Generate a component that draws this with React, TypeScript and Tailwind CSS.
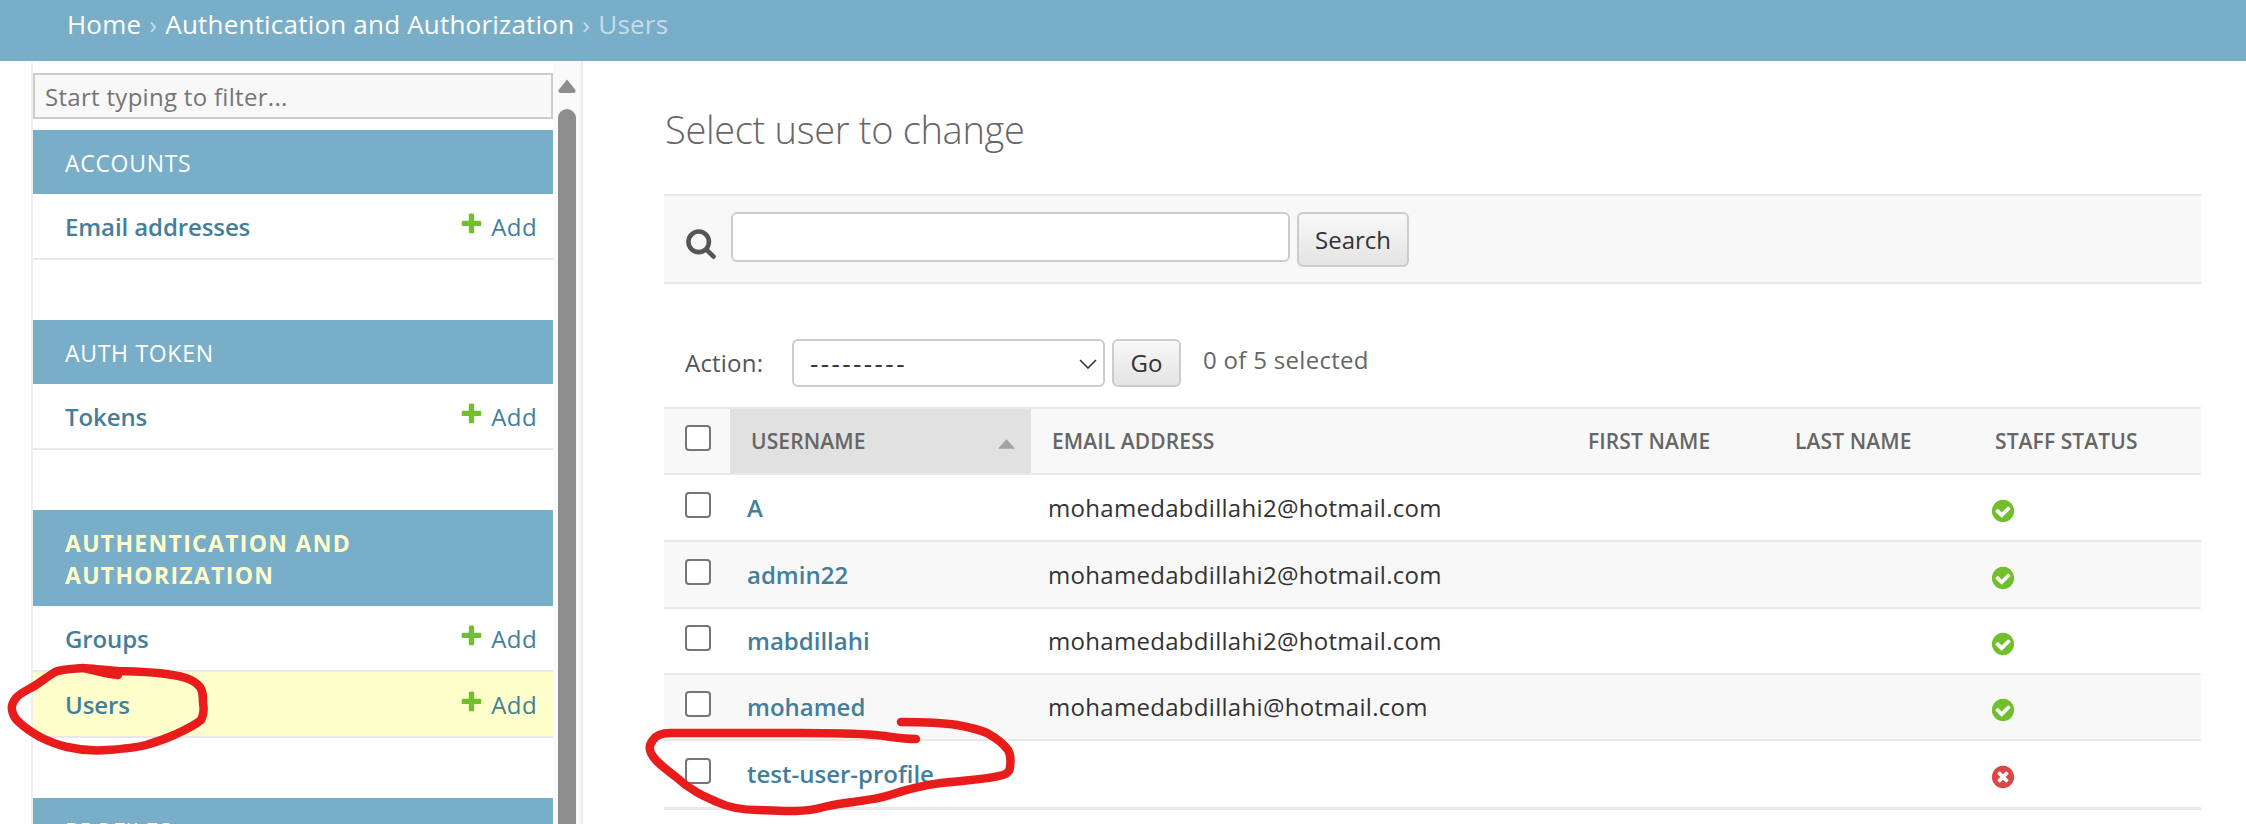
import React from 'react';

const PLUS = 'M1600 796v192q0 40-28 68t-68 28h-416v416q0 40-28 68t-68 28h-192q-40 0-68-28t-28-68v-416h-416q-40 0-68-28t-28-68v-192q0-40 28-68t68-28h416v-416q0-40 28-68t68-28h192q40 0 68 28t28 68v416h416q40 0 68 28t28 68z';
const YES = 'M1412 734q0-28-18-46l-91-90q-19-19-45-19t-45 19l-408 407-226-226q-19-19-45-19t-45 19l-91 90q-18 18-18 46 0 27 18 45l362 362q19 19 45 19 27 0 46-19l543-543q18-18 18-45zm252 162q0 209-103 385.5t-279.5 279.5-385.5 103-385.5-103-279.5-279.5-103-385.5 103-385.5 279.5-279.5 385.5-103 385.5 103 279.5 279.5 103 385.5z';
const NO = 'M1277 1122q0-26-19-45l-181-181 181-181q19-19 19-45 0-27-19-46l-90-90q-19-19-46-19-26 0-45 19l-181 181-181-181q-19-19-45-19-27 0-46 19l-90 90q-19 19-19 46 0 26 19 45l181 181-181 181q-19 19-19 45 0 27 19 46l90 90q19 19 46 19 26 0 45-19l181-181 181 181q19 19 45 19 27 0 46-19l90-90q19-19 19-46zm387-226q0 209-103 385.5t-279.5 279.5-385.5 103-385.5-103-279.5-279.5-103-385.5 103-385.5 279.5-279.5 385.5-103 385.5 103 279.5 279.5 103 385.5z';
const SEARCH = 'M1216 832q0-185-131.5-316.5t-316.5-131.5-316.5 131.5-131.5 316.5 131.5 316.5 316.5 131.5 316.5-131.5 131.5-316.5zm512 832q0 52-38 90t-90 38q-54 0-90-38l-343-342q-179 124-399 124-143 0-273.5-55.5t-225-150-150-225-55.5-273.5 55.5-273.5 150-225 225-150 273.5-55.5 273.5 55.5 225 150 150 225 55.5 273.5q0 220-124 399l343 343q37 37 37 90z';

function Fa({ d, className }: { d: string; className: string }) {
  return (
    <svg viewBox="0 0 1792 1792" className={className} fill="currentColor">
      <path d={d} />
    </svg>
  );
}

function NavRow({ label, selected }: { label: string; selected?: boolean }) {
  return (
    <div className={`flex h-[66px] items-center justify-between border-b-2 border-[#e8e8e8] pl-[32px] pr-[16px] pt-[1px] ${selected ? 'bg-[#ffffcc]' : ''}`}>
      <a className="text-[24px] font-semibold tracking-[-0.1px] text-[#447e9b]">{label}</a>
      <span className="flex items-center gap-[7px] text-[24px] tracking-[0.4px] text-[#447e9b]">
        <Fa d={PLUS} className="mb-[7px] h-[25px] w-[25px] text-[#70bf2b]" />
        Add
      </span>
    </div>
  );
}

function Caption({ label, active, tall }: { label: string; active?: boolean; tall?: boolean }) {
  return (
    <div className={`flex items-center pl-[32px] pr-[40px] pt-[2px] text-[23px] leading-[32px] ${tall ? 'h-[96px]' : 'h-[64px]'} bg-[#79aec8] ${active ? 'font-bold tracking-[1.3px] text-[#ffffcc]' : 'tracking-[0.7px] text-white'}`}>
      {label}
    </div>
  );
}

function Sidebar() {
  return (
    <nav className="ml-[31px] flex h-[763px] w-[552px] shrink-0 border-x-2 border-[#eeeeee]">
      <div className="w-[520px] shrink-0 pt-[12px]">
        <input
          placeholder="Start typing to filter..."
          className="mb-[11px] block h-[46px] w-full border-2 border-[#cccccc] bg-[#f8f8f8] px-[10px] text-[24px] tracking-[0.3px] placeholder:text-[#757575]"
        />
        <Caption label="ACCOUNTS" />
        <NavRow label="Email addresses" />
        <div className="h-[60px]" />
        <Caption label="AUTH TOKEN" />
        <NavRow label="Tokens" />
        <div className="h-[60px]" />
        <Caption label="AUTHENTICATION AND AUTHORIZATION" active tall />
        <NavRow label="Groups" />
        <NavRow label="Users" selected />
        <div className="h-[60px]" />
        <Caption label="PROFILES" />
      </div>
      <div className="flex flex-1 flex-col items-center bg-[#fafafa] pt-[18px]">
        <svg viewBox="0 0 18 14" className="h-[14px] w-[18px]" fill="#8d8d8d">
          <path d="M9 0.5 L17.5 11 Q18 14 15 14 L3 14 Q0 14 0.5 11 Z" />
        </svg>
        <div className="mt-[16px] w-[18px] flex-1 rounded-t-[9px] bg-[#8d8d8d]" />
      </div>
    </nav>
  );
}

function Check() {
  return <span className="block h-[26px] w-[26px] rounded-[4px] border-2 border-[#767676] bg-white" />;
}

const users = [
  { name: 'A', email: 'mohamedabdillahi2@hotmail.com', staff: true },
  { name: 'admin22', email: 'mohamedabdillahi2@hotmail.com', staff: true },
  { name: 'mabdillahi', email: 'mohamedabdillahi2@hotmail.com', staff: true },
  { name: 'mohamed', email: 'mohamedabdillahi@hotmail.com', staff: true },
  { name: 'test-user-profile', email: '', staff: false },
];

function UserTable() {
  const th = 'border-y-2 border-[#e8e8e8] pt-[2px] text-left align-middle text-[21px] font-semibold tracking-[0.1px] text-[#666666]';
  return (
    <table className="w-[1537px] table-fixed border-separate border-spacing-0">
      <thead>
        <tr className="h-[68px] bg-[#f8f8f8]">
          <th className={`${th} w-[66px] pl-[21px]`}><span className="-mt-[8px] block"><Check /></span></th>
          <th className={`${th} w-[301px] bg-[#e1e1e1] pl-[21px]`}>
            <span className="flex items-center justify-between pr-[16px]">
              USERNAME
              <svg viewBox="0 0 18 10" className="mt-[4px] h-[10px] w-[17px]" fill="#a3a3a3"><path d="M9 0 L18 10 L0 10 Z" /></svg>
            </span>
          </th>
          <th className={`${th} w-[542px] pl-[21px]`}>EMAIL ADDRESS</th>
          <th className={`${th} w-[206px] pl-[15px]`}>FIRST NAME</th>
          <th className={`${th} w-[201px] pl-[16px]`}>LAST NAME</th>
          <th className={`${th} pl-[15px]`}>STAFF STATUS</th>
        </tr>
      </thead>
      <tbody>
        {users.map((u, i) => {
          const last = i === users.length - 1;
          const td = `align-middle border-b-2 border-[#e8e8e8] ${last ? 'border-b-[3px]' : ''}`;
          return (
            <tr key={u.name} className={`${i === 4 ? 'h-[69px]' : i < 2 ? 'h-[67px]' : 'h-[66px]'} ${i % 2 === 1 ? 'bg-[#f8f8f8]' : ''}`}>
              <td className={`${td} pl-[21px]`}><span className="-mt-[6px] block"><Check /></span></td>
              <td className={`${td} pl-[17px] text-[24px] font-semibold tracking-[0px] text-[#447e9b]`}>{u.name}</td>
              <td className={`${td} pl-[17px] text-[24px] tracking-[0.3px] text-[#333333]`}>{u.email}</td>
              <td className={td} />
              <td className={td} />
              <td className={`${td} pl-[12px]`}>
                <Fa d={u.staff ? YES : NO} className={`h-[26px] w-[26px] -translate-x-[2px] translate-y-[3px] ${u.staff ? 'text-[#70bf2b]' : 'text-[#dd4646]'}`} />
              </td>
            </tr>
          );
        })}
      </tbody>
    </table>
  );
}

function Annotations() {
  return (
    <svg className="pointer-events-none absolute inset-0" width="2246" height="824" fill="none" stroke="#e91c1c" strokeWidth="8.5" strokeLinecap="round" strokeLinejoin="round">
      <path d="M118 675 C105 674 95 670 83 668 C70 669 62 669 55 672 C47 677 42 681 36 685 C26 691 20 693 16 698 C12 703 11 706 12 710 C13 716 16 720 20 723 C26 729 33 733 40 737 C50 742 58 745 67 747 C80 750 95 751 107 750 C122 749 135 748 146 745 C156 742 165 739 174 735 C185 730 194 726 201 720 C204 714 204 708 203 703 C203 696 203 691 200 687 C196 682 192 680 186 678 C176 675 168 674 158 673 C145 672 132 671 118 671 C105 670 95 669 83 668" />
      <path d="M916 739 C900 739 888 736 875 735 C850 733 825 733 799 733 L671 733 C662 733 656 735 653 740 C649 745 649 749 651 753 C655 762 665 768 676 777 C690 790 703 796 717 802 C730 808 745 810 758 810 C780 811 802 813 824 807 C848 801 868 802 890 795 C908 789 925 785 941 783 C965 780 985 780 1003 775 C1009 773 1010 770 1010 767 C1011 760 1011 755 1008 750 C1003 743 996 738 987 733 C978 729 968 727 957 725 C938 722 920 722 901 722" />
    </svg>
  );
}

export default function App() {
  return (
    <div className="relative h-[824px] w-full overflow-hidden bg-white font-['Open_Sans',sans-serif] text-[#333333]">
      <header className="flex h-[61px] items-start bg-[#79aec8] pl-[67px] pt-[6px] text-[26px] leading-[36px] tracking-[0.2px] text-white">
        <span>Home</span>
        <span className="px-[8px] text-[#c4dce8]">›</span>
        <span>Authentication and Authorization</span>
        <span className="px-[8px] text-[#c4dce8]">›</span>
        <span className="text-[#c4dce8]">Users</span>
      </header>
      <div className="flex">
        <Sidebar />
        <main className="ml-[81px] w-[1537px]">
          <h1 className="mt-[33px] mb-[30px] h-[70px] pl-[1px] text-[38px] font-light leading-[70px] tracking-[-0.3px] text-[#666666]">Select user to change</h1>
          <div className="flex h-[90px] items-start border-y-2 border-[#e8e8e8] bg-[#f8f8f8] pl-[21px] pt-[16px]">
            <Fa d={SEARCH} className="mt-[15px] h-[32px] w-[32px] text-[#555555]" />
            <input className="ml-[14px] h-[50px] w-[559px] rounded-[6px] border-2 border-[#cccccc] bg-white" />
            <button className="ml-[7px] h-[55px] w-[112px] rounded-[6px] border-2 border-[#cccccc] bg-gradient-to-b from-[#f8f8f8] to-[#e4e4e4] text-[24px] text-[#333333]">Search</button>
          </div>
          <div className="mt-[55px] mb-[20px] flex h-[48px] items-center pl-[21px]">
            <label className="w-[107px] text-[24px] tracking-[0.2px] text-[#555555]">Action:</label>
            <div className="relative w-[313px]">
              <select className="block h-[48px] w-full appearance-none rounded-[6px] border-2 border-[#cccccc] bg-white pl-[16px] text-[26px] font-medium tracking-[2.4px]">
                <option>---------</option>
              </select>
              <svg viewBox="0 0 18 10" className="pointer-events-none absolute right-[8px] top-[20px] h-[10px] w-[18px]" fill="none" stroke="#333333" strokeWidth="1.6"><path d="M1 1 L9 9 L17 1" /></svg>
            </div>
            <button className="ml-[7px] h-[48px] w-[69px] rounded-[6px] border-2 border-[#cccccc] bg-gradient-to-b from-[#f8f8f8] to-[#e4e4e4] text-[24px] text-[#333333]">Go</button>
            <span className="-mt-[6px] ml-[22px] text-[24px] tracking-[0.3px] text-[#666666]">0 of 5 selected</span>
          </div>
          <UserTable />
        </main>
      </div>
      <Annotations />
    </div>
  );
}
